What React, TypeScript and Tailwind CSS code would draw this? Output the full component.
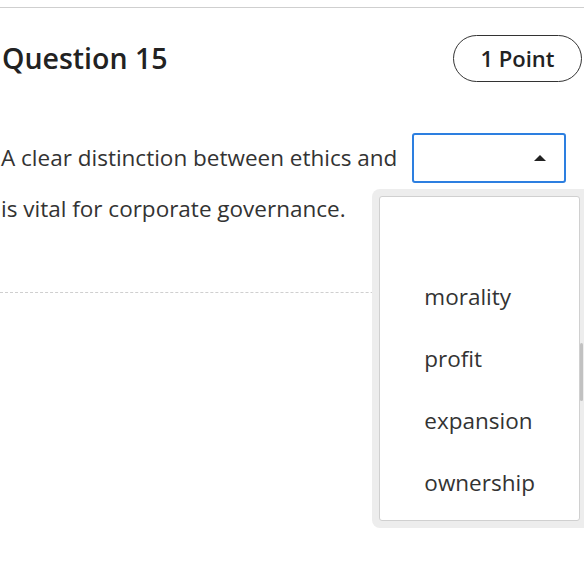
import React from 'react';

const options = ['', 'morality', 'profit', 'expansion', 'ownership'];

export default function App() {
  return (
    <div className="relative w-[584px] h-[585px] overflow-hidden bg-white text-[#333] font-['Open_Sans',sans-serif]">
      {/* top rule */}
      <div className="mt-[7px] border-t border-[#cfcfcf]" />

      {/* Header */}
      <div className="flex items-center justify-between pl-[2px] pr-[2px] pt-[27px]">
        <h2 className="text-[28.5px] font-semibold leading-none text-[#222]">Question 15</h2>
        <span className="flex h-[47px] w-[129px] items-center justify-center rounded-full border border-[#333] text-[22px] font-semibold text-[#222]">
          1 Point
        </span>
      </div>

      {/* Question body */}
      <div className="mt-[51px] pl-[1px] text-[22.5px]">
        <div className="flex h-[50px] items-center">
          <span>A clear distinction between ethics and</span>
          <div className="relative ml-[15px]">
            <div className="flex h-[50px] w-[154px] items-center justify-end rounded-[3px] border-2 border-[#2d7fe0] pr-[18px]">
              <svg width="12" height="6" viewBox="0 0 12 6">
                <polygon points="0,6 12,6 6,0" fill="#222" />
              </svg>
            </div>

            {/* Open listbox */}
            <div className="absolute left-[-40px] top-[56px] z-10 w-[220px] rounded-[8px] bg-[#ededed] p-[7px] pr-0">
              <div className="relative h-[325px] w-[201px] rounded-[3px] border border-[#d0d0d0] bg-white pt-[7px]">
                {options.map((o) => (
                  <div key={o || 'blank'} className="flex h-[62px] items-center pl-[44px] text-[22.5px] text-[#333]">
                    {o}
                  </div>
                ))}
                <div className="absolute right-[-4px] top-[146px] h-[58px] w-[3px] rounded-full bg-[#c1c1c1]" />
              </div>
            </div>
          </div>
        </div>
        <div className="flex h-[52px] items-center">
          <span>is vital for corporate governance.</span>
        </div>
      </div>

      {/* dashed separator */}
      <div className="mt-[57px] border-t border-dashed border-[#cfcfcf]" />
    </div>
  );
}
